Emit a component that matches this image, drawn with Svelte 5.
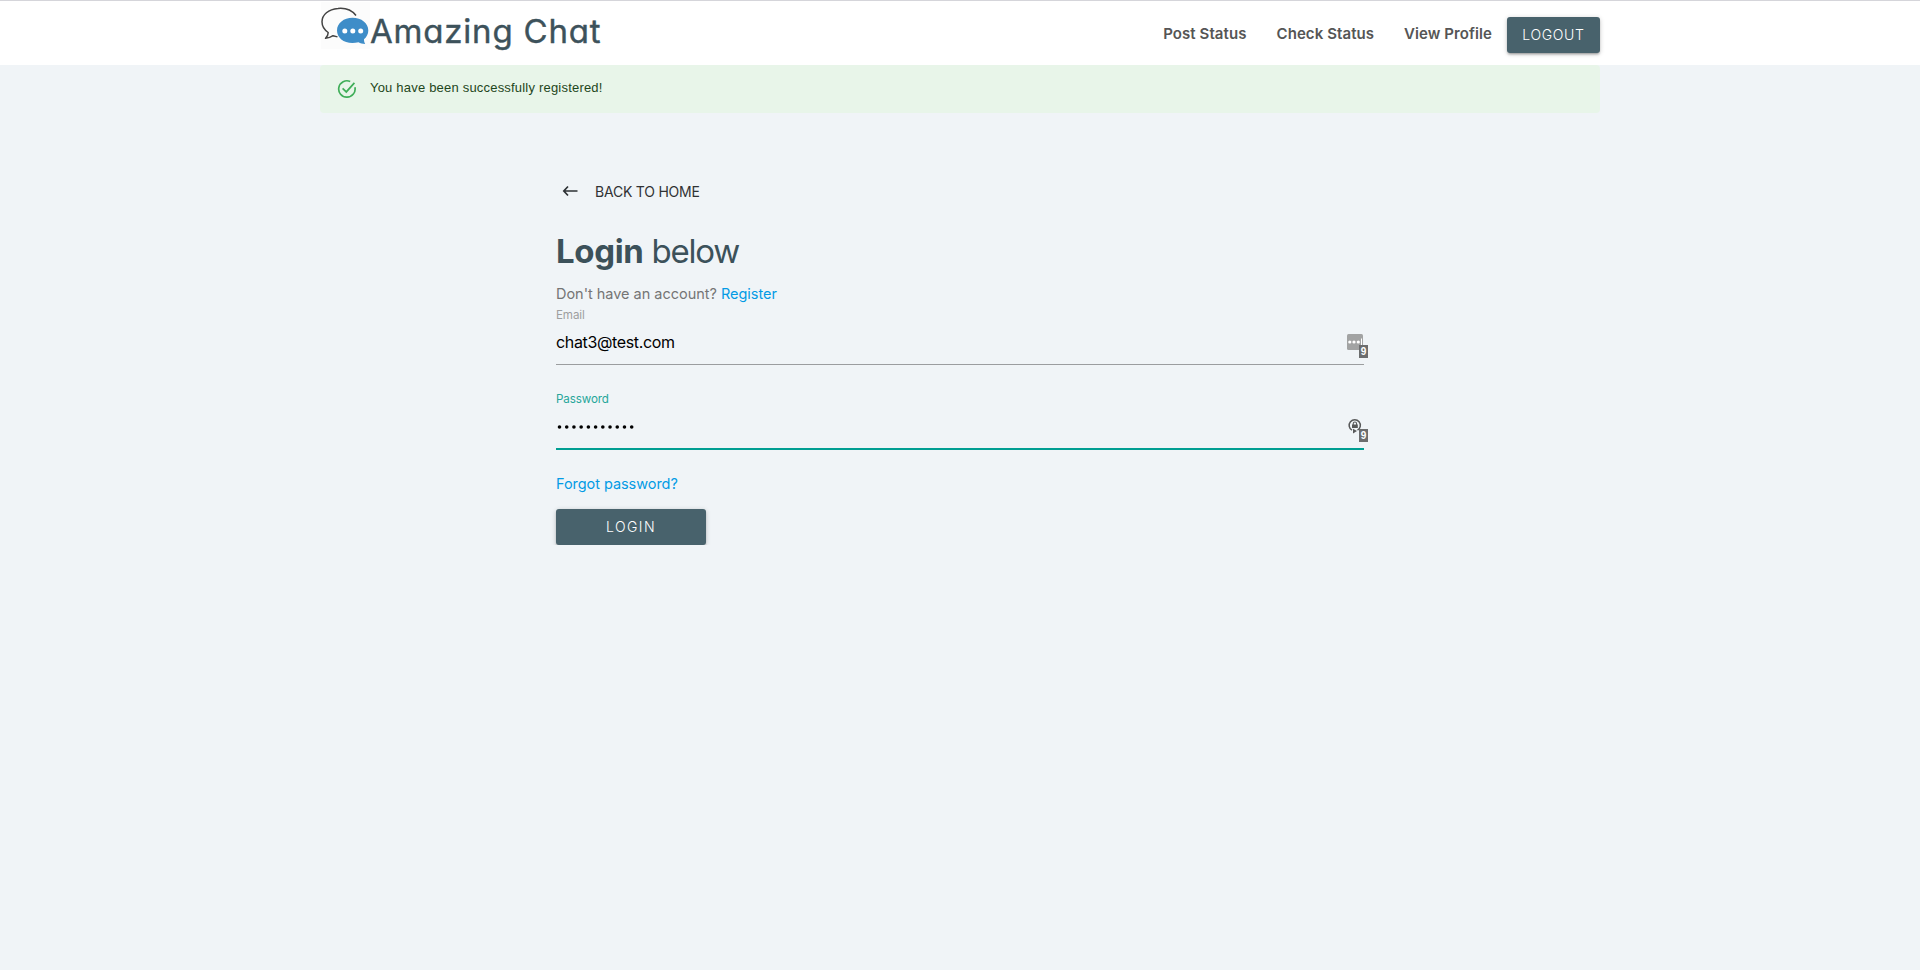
<script>
  const links = ['Post Status', 'Check Status', 'View Profile'];
  let email = $state('chat3@test.com');
  const dots = Array.from({ length: 11 }, (_, i) => 3.5 + i * 7.22);
</script>

<header>
  <div class="container bar">
    <a class="brand" href="#home" aria-label="Amazing Chat">
      <svg width="290" height="64" viewBox="0 0 290 64">
        <rect x="1" y="2" width="49" height="47" fill="#fcfcfc" />
        <path d="M36 15.500C32 10.500 25 7.800 18 8.500C8.500 9.200 2 14.800 2 21.800C2 26.300 4.200 29.800 8.200 32.500C8.200 34.800 7.200 36.800 5.500 38.300C8.800 38 11 37.200 13 35.700L17.500 36.900" fill="none" stroke="#444" stroke-width="1.500" stroke-linejoin="round" />
        <path d="M32.500 17.800C41.500 17.800 48.300 23.300 48.300 30.500C48.300 34 46.700 37 44 39.300C44 41.200 44.300 42.500 45.200 44C42.600 44 40.300 43.300 38.500 42.300C26.500 45.400 17 39 17 30.500C17 23.300 23.800 17.800 32.500 17.800Z" fill="#3e8dc8" />
        <circle cx="24.800" cy="31" r="2.500" fill="#fff" />
        <circle cx="32.800" cy="31" r="2.500" fill="#fff" />
        <circle cx="40.700" cy="31" r="2.500" fill="#fff" />
        <text class="wordmark" x="50" y="43" textLength="230.500" lengthAdjust="spacing">Amazing Chat</text>
      </svg>
    </a>
    <nav>
      {#each links as link}
        <a href="#nav">{link}</a>
      {/each}
      <button class="btn logout">LOGOUT</button>
    </nav>
  </div>
</header>

<div class="container alert">
  <svg width="20" height="20" viewBox="0 0 20 20" fill="none" stroke="#3fae58" stroke-width="1.700">
    <path d="M17.900 8.200A8.200 8.200 0 1 1 13.200 2.500M5.600 9.300L9.300 12.900L17.400 3.900" />
  </svg>
  <span>You have been successfully registered!</span>
</div>

<main>
  <a class="back" href="#home">
    <svg width="16" height="14" viewBox="0 0 16 14" fill="none" stroke="#2d3134" stroke-width="1.700">
      <path d="M15.500 7H1.800M6 2.500L1.800 7L6 11.500" />
    </svg>
    <span>BACK TO HOME</span>
  </a>
  <h4><b>Login</b> below</h4>
  <p class="account">Don't have an account? <a href="#register">Register</a></p>

  <label class="lbl" for="email">Email</label>
  <div class="field">
    <input id="email" type="text" bind:value={email} />
    <div class="manager">
      <svg width="17" height="17" viewBox="0 0 17 17">
        <rect width="16" height="16" rx="1.500" fill="#a2a3a3" />
        <g fill="#fff"><circle cx="2.800" cy="8" r="1.600" /><circle cx="7" cy="8" r="1.600" /><circle cx="11.300" cy="8" r="1.600" /><rect x="14" y="4.500" width="1" height="7.500" /></g>
      </svg>
      <span class="badge">9</span>
    </div>
  </div>

  <label class="lbl active" for="password">Password</label>
  <div class="field focused" id="password">
    <svg width="90" height="8" viewBox="0 0 90 8">
      {#each dots as cx}<circle {cx} cy="4" r="1.800" fill="#000" />{/each}
    </svg>
    <div class="manager">
      <svg width="17" height="17" viewBox="0 0 17 17" fill="none" stroke="#58595a">
        <path d="M5 12.200A5.600 5.600 0 1 1 10.500 12.200" stroke-width="1.500" />
        <path d="M6 10.800L10 13L6 15.500Z" fill="#58595a" stroke="none" />
        <rect x="5" y="6.500" width="5.800" height="3.500" fill="#58595a" stroke="none" />
        <path d="M6.200 7V5.700A1.700 1.700 0 0 1 9.600 5.700V7" stroke-width="1.100" />
      </svg>
      <span class="badge">9</span>
    </div>
  </div>

  <a class="forgot" href="#forgot">Forgot password?</a>
  <button class="btn login">LOGIN</button>
</main>

<style>
  :global(body) {
    margin: 0;
    background: #f0f4f7;
    font-family: Inter, 'Liberation Sans', sans-serif;
    font-size: 14.5px;
  }
  a { text-decoration: none; }
  .container { width: 1280px; margin: 0 auto; box-sizing: border-box; }
  header { height: 65px; box-sizing: border-box; background: #fff; border-top: 1px solid #d5d5da; }
  .bar { display: flex; justify-content: space-between; height: 64px; }
  .brand svg { display: block; margin-top: -1px; }
  .wordmark {
    font: 400 33px Inter, sans-serif;
    font-feature-settings: 'cv11' 1;
    fill: #3d525b;
    stroke: #3d525b;
    stroke-width: 0.4;
    stroke-linejoin: round;
  }
  nav { display: flex; align-items: flex-start; }
  nav a {
    color: #555;
    font-weight: 600;
    font-size: 15px;
    line-height: 20px;
    letter-spacing: 0.08px;
    padding-top: 23px;
    margin-right: 30px;
    white-space: nowrap;
  }
  nav a:nth-of-type(3) { margin-right: 15px; }
  .btn {
    display: block;
    height: 36px;
    padding: 0;
    border: 0;
    border-radius: 3px;
    background: #48626c;
    color: #fff;
    font: 300 14px/36px Inter, sans-serif;
    box-shadow: 0 2px 2px rgba(0, 0, 0, 0.14), 0 3px 1px -2px rgba(0, 0, 0, 0.12), 0 1px 5px rgba(0, 0, 0, 0.2);
  }
  .logout { width: 93px; margin-top: 16px; letter-spacing: 0.65px; }
  .alert {
    height: 48px;
    padding: 0 17px;
    display: flex;
    align-items: center;
    gap: 13px;
    background: #e8f5e9;
    border-radius: 4px;
    color: #1e4620;
    font: 13px/20px 'Liberation Sans', Arial, sans-serif;
    letter-spacing: 0.2px;
  }
  .alert span { margin-top: -2px; }
  main { width: 808px; margin: 0 auto; padding-top: 68px; }
  .back {
    display: flex;
    align-items: center;
    gap: 17px;
    height: 20px;
    margin-left: 6px;
    color: #303234;
    font-size: 14px;
    letter-spacing: -0.22px;
  }
  h4 {
    height: 44px;
    margin: 28px 0 0;
    font-size: 33px;
    line-height: 44px;
    font-weight: 400;
    color: #3c515a;
    letter-spacing: -1.25px;
  }
  h4 b { font-weight: 700; letter-spacing: -0.35px; }
  .account { margin: 10px 0 0; line-height: 22px; color: #757575; letter-spacing: -0.02px; }
  .account a, .forgot { color: #039be5; }
  .lbl { display: block; height: 14px; margin-top: 3px; font-size: 11.6px; line-height: 14px; letter-spacing: -0.1px; color: #9e9e9e; }
  .field {
    display: flex;
    align-items: center;
    position: relative;
    height: 43px;
    box-sizing: border-box;
    border-bottom: 1px solid #9b9d9f;
  }
  .field input {
    flex: 1;
    height: 40px;
    margin-bottom: 2px;
    padding: 0;
    border: 0;
    outline: 0;
    background: transparent;
    color: #000;
    font: 400 16px Inter, sans-serif;
    letter-spacing: -0.35px;
  }
  .manager { position: absolute; right: 0; top: 12px; width: 17px; height: 17px; }
  .manager svg { display: block; }
  .badge {
    position: absolute;
    left: 12px;
    top: 11px;
    width: 9px;
    height: 13px;
    background: #6c6d6e;
    color: #fff;
    font: 700 10px/13px 'Liberation Sans', sans-serif;
    text-align: center;
  }
  .lbl.active { margin-top: 27px; color: #26a69a; }
  .focused { height: 45px; border-bottom: 2px solid #009e92; margin-top: -1px; }
  .focused .manager { top: 13px; }
  .forgot { display: block; margin-top: 23px; height: 22px; line-height: 22px; letter-spacing: -0.05px; }
  .login { width: 150px; margin-top: 14px; letter-spacing: 1.4px; }
</style>
